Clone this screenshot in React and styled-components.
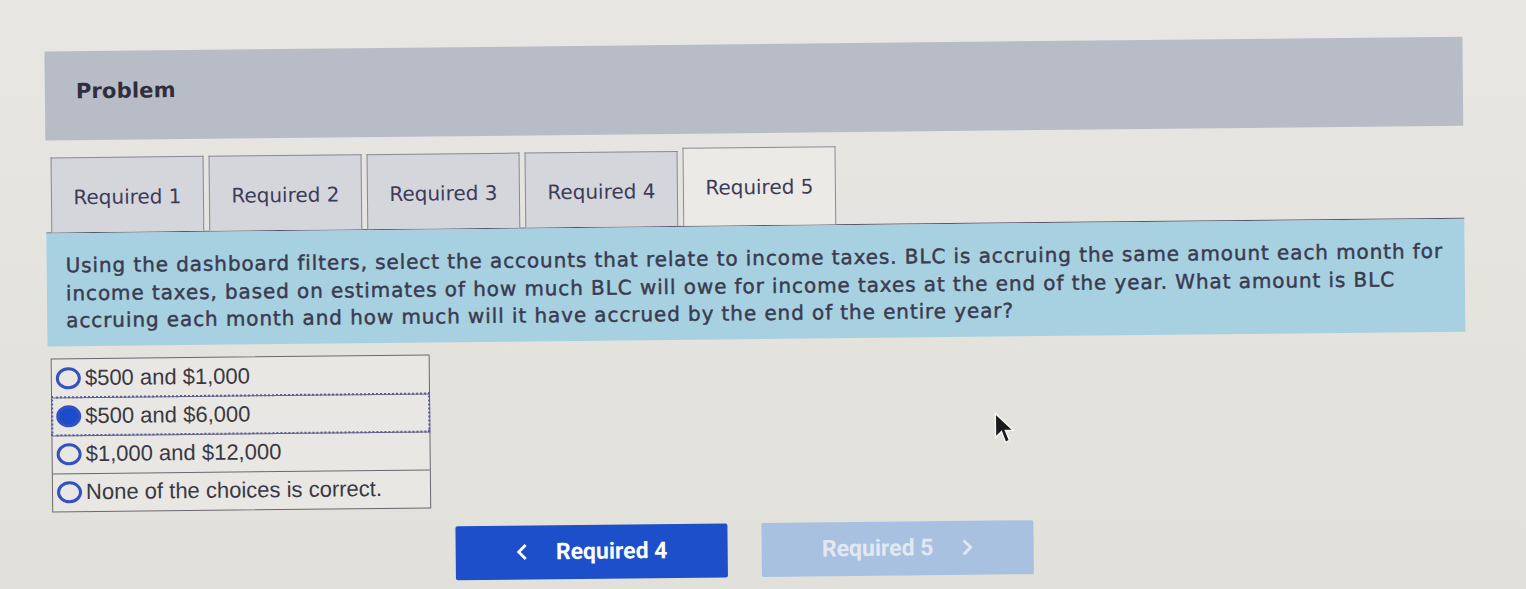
import styled, { createGlobalStyle } from "styled-components";

const GlobalStyle = createGlobalStyle`
    html, body {
        margin: 0;
        padding: 0;
        background: linear-gradient(180deg, #e7e6e2 0%, #e2e0da 100%);
        min-height: 100vh;
        overflow: hidden;
    }
`;

const Page = styled.div`
    position: relative;
    box-sizing: border-box;
    width: 1526px;
    height: 589px;
    padding: 44px 61px 0 47px;
    transform: rotate(-0.6deg);
    transform-origin: 50% 50%;
`;

const Header = styled.div`
    box-sizing: border-box;
    height: 89px;
    padding: 28px 31px 0;
    background: #b8bcc6;
    font-family: "DejaVu Sans", Verdana, sans-serif;
    font-weight: 700;
    font-size: 21px;
    line-height: 24px;
    letter-spacing: 0.2px;
    color: #2f2e3c;
`;

const TabStrip = styled.div`
    display: flex;
    align-items: flex-end;
    gap: 5px;
    height: 77px;
    margin-top: 15px;
    padding-left: 5px;
    border-bottom: 1px solid #55546a;
`;

const Tab = styled.div`
    box-sizing: border-box;
    display: flex;
    align-items: center;
    justify-content: center;
    width: 153px;
    height: ${({ $active }) => ($active ? "78px" : "75px")};
    padding-top: ${({ $active }) => ($active ? "0" : "3px")};
    border: 1px solid #8b8896;
    border-bottom: none;
    background: ${({ $active }) => ($active ? "#ebeae6" : "#d4d6dc")};
    font-family: "DejaVu Sans", Verdana, sans-serif;
    font-size: 20px;
    color: #3e3b58;
`;

const Question = styled.div`
    padding: 19px 19px 11px;
    background: #a7d1e1;
    font-family: "DejaVu Sans", Verdana, sans-serif;
    font-size: 20px;
    letter-spacing: 0.9px;
    line-height: 27.5px;
    -webkit-text-stroke: 0.45px #3a3b50;
    color: #3a3b50;
    white-space: nowrap;
`;

const Choices = styled.div`
    width: 377px;
    margin: 12px 0 0 3px;
    border: 1px solid #6c6770;
    background: #e8e7e3;
`;

const Choice = styled.div`
    box-sizing: border-box;
    display: flex;
    align-items: center;
    gap: 4px;
    height: 38px;
    padding-left: 4px;
    border-top: ${({ $first }) => ($first ? "none" : "1px solid #6c6770")};
    outline: ${({ $focused }) => ($focused ? "2px dotted #5b5da6" : "none")};
    outline-offset: -1px;
    font-family: "Liberation Sans", Arial, sans-serif;
    font-size: 22px;
    color: #3a3843;
`;

const Radio = styled.span`
    box-sizing: border-box;
    flex-shrink: 0;
    width: 25px;
    height: 22px;
    border-radius: 50%;
    border: 3px solid #3551c0;
    background: ${({ $checked }) => ($checked ? "#1b4ccc" : "transparent")};
`;

const ButtonRow = styled.div`
    display: flex;
    justify-content: center;
    gap: 34px;
    margin-top: 18px;
    padding-right: 28px;
`;

const NavButton = styled.button`
    display: flex;
    align-items: center;
    justify-content: center;
    gap: 28px;
    width: 272px;
    height: 54px;
    border: none;
    border-radius: 2px;
    background: ${({ $disabled }) => ($disabled ? "#a9c1e0" : "#1d4fca")};
    color: ${({ $disabled }) => ($disabled ? "#e1e8f2" : "#ffffff")};
    font-family: Roboto, "Liberation Sans", sans-serif;
    font-weight: 700;
    font-size: 23px;
`;

const Cursor = styled.svg`
    position: absolute;
    left: 992px;
    top: 414px;
`;

const Chevron = ({ dir }) => (
    <svg width="12" height="17" viewBox="0 0 12 17">
        <polyline
            points={dir === "left" ? "10,1.5 3,8.5 10,15.5" : "2,1.5 9,8.5 2,15.5"}
            fill="none"
            stroke="currentColor"
            strokeWidth="2.8"
            strokeLinejoin="miter"
        />
    </svg>
);

const tabs = ["Required 1", "Required 2", "Required 3", "Required 4", "Required 5"];

const choices = [
    "$500 and $1,000",
    "$500 and $6,000",
    "$1,000 and $12,000",
    "None of the choices is correct.",
];

export default function App() {
    return (
        <>
            <GlobalStyle />
            <Page>
                <Header>Problem</Header>
                <TabStrip>
                    {tabs.map((t, i) => (
                        <Tab key={t} $active={i === 4}>{t}</Tab>
                    ))}
                </TabStrip>
                <Question>
                    Using the dashboard filters, select the accounts that relate to income taxes. BLC is accruing the same amount each month for
                    <br />
                    income taxes, based on estimates of how much BLC will owe for income taxes at the end of the year. What amount is BLC
                    <br />
                    accruing each month and how much will it have accrued by the end of the entire year?
                </Question>
                <Choices>
                    {choices.map((c, i) => (
                        <Choice key={c} $first={i === 0} $focused={i === 1}>
                            <Radio $checked={i === 1} />
                            {c}
                        </Choice>
                    ))}
                </Choices>
                <ButtonRow>
                    <NavButton>
                        <Chevron dir="left" />
                        Required 4
                    </NavButton>
                    <NavButton $disabled>
                        Required 5
                        <Chevron dir="right" />
                    </NavButton>
                </ButtonRow>
                <Cursor width="22" height="34" viewBox="0 0 22 34">
                    <path d="M2 2 L2 26 L8 20 L12 31 L16 29 L12 19 L20 19 Z" fill="#1a1a1a" stroke="#f4f4f4" strokeWidth="1.5" />
                </Cursor>
            </Page>
        </>
    );
}
